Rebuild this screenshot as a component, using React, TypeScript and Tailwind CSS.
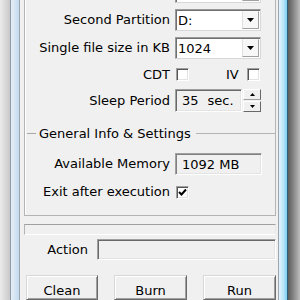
import React from "react";

function Tri({ up = false, w = 7, h = 4 }: { up?: boolean; w?: number; h?: number }) {
  const pts = up ? `0,${h} ${w},${h} ${w / 2},0` : `0,0 ${w},0 ${w / 2},${h}`;
  return (
    <svg width={w} height={h} viewBox={`0 0 ${w} ${h}`}>
      <polygon points={pts} fill="#000" />
    </svg>
  );
}

function Select({ value }: { value: string }) {
  return (
    <div className="ml-[5px] flex h-[22px] w-[86px] border border-t-[#9a9a9a] border-l-[#9a9a9a] border-r-[#d8d8d8] border-b-[#d8d8d8] bg-white shadow-[inset_1px_1px_0_#707070]">
      <div className="flex flex-1 items-center pl-[2px] pt-[1px]">{value}</div>
      <div className="mb-[1px] mr-[1px] mt-[1px] flex w-[17px] items-center justify-center border border-t-[#fafafa] border-l-[#e0e0e0] border-r-[#a0a0a0] border-b-[#a0a0a0] bg-[#f7f7f7]">
        <Tri />
      </div>
    </div>
  );
}

function Check({ checked = false }: { checked?: boolean }) {
  return (
    <div className="flex h-[13px] w-[13px] items-center justify-center border border-t-[#a0a0a0] border-l-[#a0a0a0] border-r-white border-b-white bg-white shadow-[inset_1px_1px_0_#555555,inset_-1px_-1px_0_#e3e3e3]">
      {checked && (
        <svg width="9" height="9" viewBox="0 0 9 9">
          <path d="M1 4 L3.5 6.5 L8 1.5" stroke="#000" strokeWidth="2" fill="none" />
        </svg>
      )}
    </div>
  );
}

function Label({ children }: { children: React.ReactNode }) {
  return <div className="w-[145px] shrink-0 text-right">{children}</div>;
}

export default function App() {
  return (
    <div className="flex h-[300px] w-[300px] overflow-hidden bg-[#f0f0f0] font-['DejaVu_Sans',Verdana,sans-serif] text-[13px] leading-[16px] text-black">
      {/* left shadow + frame */}
      <div className="w-[10px] shrink-0 bg-gradient-to-r from-[#ececec] to-[#c9c9c9]" />
      <div className="w-px shrink-0 bg-[#8e9aa6]" />
      <div className="w-[8px] shrink-0 bg-gradient-to-r from-[#e4eef8] to-[#c5daee]" />
      <div className="w-px shrink-0 bg-[#9aa6b2]" />

      {/* client */}
      <div className="flex w-[258px] shrink-0 flex-col">
        {/* group box */}
        <div className="ml-[4px] mt-[-26px] flex w-[252px] flex-col border border-[#b4b4b4] shadow-[inset_1px_1px_0_#ffffff]">
          {/* row 0 (cut off) */}
          <div className="mt-[6px] flex h-[22px] items-center">
            <Label>Temporary Path</Label>
            <Select value="C:" />
          </div>
          <div className="mt-[6px] flex h-[22px] items-center">
            <Label>Second Partition</Label>
            <Select value="D:" />
          </div>
          <div className="mt-[6px] flex h-[22px] items-center">
            <Label>Single file size in KB</Label>
            <Select value="1024" />
          </div>
          <div className="mt-[4px] flex h-[23px] items-center">
            <Label>CDT</Label>
            <div className="ml-[6px]">
              <Check />
            </div>
            <div className="ml-[37px]">IV</div>
            <div className="ml-[8px]">
              <Check />
            </div>
          </div>
          <div className="mt-[3px] flex h-[23px] items-center">
            <Label>Sleep Period</Label>
            <div className="ml-[5px] flex h-[23px] w-[67px] items-center border border-t-[#a0a0a0] border-l-[#a0a0a0] border-r-white border-b-white bg-[#f0f0f0] pl-[6px] shadow-[inset_1px_1px_0_#696969,inset_-1px_-1px_0_#e3e3e3]">
              <span>35</span>
              <span className="ml-[9px]">sec.</span>
            </div>
            <div className="ml-px flex h-[23px] w-[18px] flex-col">
              <div className="flex h-[11px] items-center justify-center border border-t-white border-l-white border-r-[#696969] border-b-[#a0a0a0] bg-[#f0f0f0]">
                <Tri up w={5} h={3} />
              </div>
              <div className="mt-px flex h-[11px] items-center justify-center border border-t-white border-l-white border-r-[#696969] border-b-[#696969] bg-[#f0f0f0]">
                <Tri w={5} h={3} />
              </div>
            </div>
          </div>

          {/* General info header */}
          <div className="mt-[13px] flex h-[17px] items-center">
            <div className="ml-[2px] h-px w-[9px] bg-[#a8a8a8]" />
            <div className="ml-[3px] whitespace-nowrap">General Info &amp; Settings</div>
            <div className="ml-[5px] h-px flex-1 bg-[#b4b4b4]" />
          </div>

          <div className="mt-[11px] flex h-[22px] items-center">
            <Label>Available Memory</Label>
            <div className="ml-[5px] flex h-[22px] w-[87px] items-center border border-t-[#a0a0a0] border-l-[#a0a0a0] border-r-white border-b-white bg-[#f0f0f0] pl-[6px] pt-[1px] shadow-[inset_1px_1px_0_#808080,inset_-1px_-1px_0_#e3e3e3]">
              1092 MB
            </div>
          </div>

          <div className="mb-[12px] mt-[5px] flex h-[23px] items-center">
            <Label>Exit after execution</Label>
            <div className="ml-[6px] mt-[2px]">
              <Check checked />
            </div>
          </div>
        </div>

        {/* progress box */}
        <div className="ml-[4px] mt-[8px] h-[15px] w-[252px] border border-t-[#a0a0a0] border-l-[#b4b4b4] border-r-[#e8e8e8] border-b-white bg-[#f0f0f0]" />

        {/* action row */}
        <div className="ml-[4px] mt-[4px] flex h-[21px] w-[252px] items-center">
          <div className="w-[64px] text-right">Action</div>
          <div className="ml-[9px] h-[21px] flex-1 border border-t-[#a0a0a0] border-l-[#a0a0a0] border-r-white border-b-white bg-[#f0f0f0] shadow-[inset_1px_1px_0_#696969,inset_-1px_-1px_0_#e3e3e3]" />
        </div>

        {/* buttons */}
        <div className="ml-[6px] mt-[15px] flex">
          <button className="flex h-[25px] w-[72px] items-center justify-center border border-t-[#d8d8d8] border-l-[#d8d8d8] border-r-[#6a6a6a] border-b-[#6a6a6a] bg-[#f0f0f0] pt-[7px] shadow-[inset_1px_1px_0_#ffffff,inset_-1px_-1px_0_#a0a0a0]">
            Clean
          </button>
          <button className="ml-[16px] flex h-[25px] w-[73px] items-center justify-center border border-t-[#d8d8d8] border-l-[#d8d8d8] border-r-[#6a6a6a] border-b-[#6a6a6a] bg-[#f0f0f0] pt-[7px] shadow-[inset_1px_1px_0_#ffffff,inset_-1px_-1px_0_#a0a0a0]">
            Burn
          </button>
          <button className="ml-[16px] flex h-[25px] w-[73px] items-center justify-center border border-t-[#d8d8d8] border-l-[#d8d8d8] border-r-[#6a6a6a] border-b-[#6a6a6a] bg-[#f0f0f0] pt-[7px] shadow-[inset_1px_1px_0_#ffffff,inset_-1px_-1px_0_#a0a0a0]">
            Run
          </button>
        </div>
      </div>

      {/* right frame + shadow */}
      <div className="w-px shrink-0 bg-[#9aa6b2]" />
      <div className="w-[8px] shrink-0 bg-gradient-to-r from-[#e2f2fb] via-[#bfe6fa] to-[#7ccdf2]" />
      <div className="w-px shrink-0 bg-[#2f5f7c]" />
      <div className="w-[12px] shrink-0 bg-gradient-to-r from-[#5c5c5c] to-[#bdbdbd]" />
    </div>
  );
}
